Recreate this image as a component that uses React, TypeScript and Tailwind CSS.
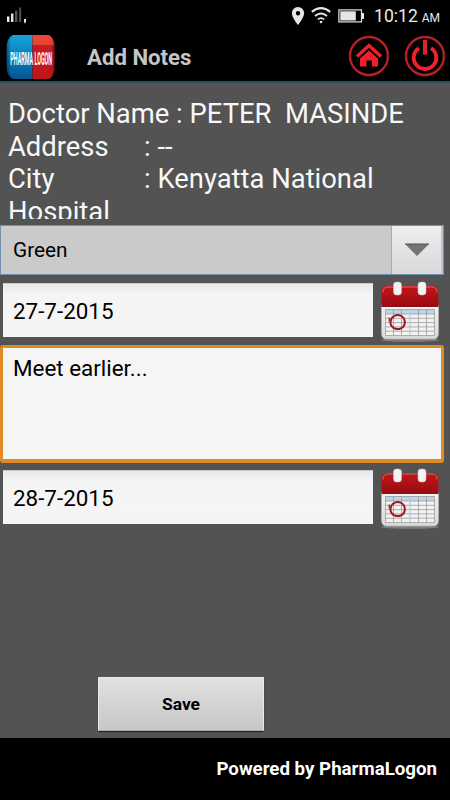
import React, { useState } from "react";

function StatusBar() {
  return (
    <div className="flex h-8 items-start justify-between">
      <svg className="ml-[6px] mt-[6px]" width="22" height="18" viewBox="0 0 22 18">
        <rect x="1" y="10.5" width="2.4" height="5.5" fill="#f2f2f2" />
        <rect x="5" y="7.5" width="2.4" height="8.5" fill="#e6e6e6" />
        <rect x="9" y="4.5" width="2.4" height="11.5" fill="#555" />
        <rect x="13" y="1.5" width="2.2" height="14.5" fill="#4b4b4b" />
        <path d="M18 13h2v3l-1 1.2h-.8l.3-1.4H18z" fill="#eee" />
      </svg>
      <div className="flex items-start text-[#e9e9e9]">
        <svg className="mt-[7px]" width="14" height="18" viewBox="0 0 14 18">
          <path
            fillRule="evenodd"
            d="M7 0a6.1 6.1 0 0 1 6.1 6.2C13.1 10.5 7 18 7 18S.9 10.5.9 6.2A6.1 6.1 0 0 1 7 0zm0 4a2.2 2.2 0 1 0 0 4.4A2.2 2.2 0 0 0 7 4z"
            fill="#e6e6e6"
          />
        </svg>
        <svg className="ml-[6px] mt-[7px]" width="20" height="17" viewBox="0 0 20 17" fill="none" stroke="#e6e6e6">
          <path d="M.8 4.9Q10-2.600 19.2 4.9" strokeWidth="2" />
          <path d="M4 8.9q6-5 12 0" strokeWidth="1.9" />
          <path d="M6.800 12.4q3.200-2.600 6.400 0" strokeWidth="1.8" />
          <circle cx="10" cy="15" r="1.3" fill="#e6e6e6" stroke="none" />
        </svg>
        <svg className="ml-[7px] mt-[9px]" width="27" height="14" viewBox="0 0 27 14">
          <rect x=".9" y=".9" width="22.6" height="12" fill="none" stroke="#e6e6e6" strokeWidth="1.2" />
          <rect x="2.3" y="2.3" width="15.500" height="9.2" fill="#e6e6e6" />
          <rect x="24" y="4" width="2" height="6" fill="#e6e6e6" />
        </svg>
        <div className="ml-[9px] mr-[10px] mt-[6px] flex w-[66px] items-baseline justify-between whitespace-nowrap leading-5">
          <span className="text-[17.6px]">10:12</span>
          <span className="text-[12px]">AM</span>
        </div>
      </div>
    </div>
  );
}

function Logo() {
  return (
    <svg className="overflow-visible" width="50" height="46" viewBox="0 0 50 46">
      <defs>
        <linearGradient id="logoBlue" x1="0" y1="0" x2="0" y2="1">
          <stop offset="0" stopColor="#18a5dc" />
          <stop offset=".5" stopColor="#087fbd" />
          <stop offset="1" stopColor="#08518e" />
        </linearGradient>
        <linearGradient id="logoRed" x1="0" y1="0" x2="0" y2="1">
          <stop offset="0" stopColor="#ee4638" />
          <stop offset=".24" stopColor="#e54335" />
          <stop offset=".25" stopColor="#c51c20" />
          <stop offset="1" stopColor="#be1519" />
        </linearGradient>
        <linearGradient id="logoEdge">
          <stop offset="0" stopColor="#000" stopOpacity=".45" />
          <stop offset=".1" stopColor="#000" stopOpacity="0" />
          <stop offset=".9" stopColor="#000" stopOpacity="0" />
          <stop offset="1" stopColor="#000" stopOpacity=".5" />
        </linearGradient>
        <clipPath id="logoShape">
          <path d="M7 1h36q5 3 5.500 10v24q-.5 7-5.500 10H7q-6-3-6.300-11V12Q1 4 7 1z" />
        </clipPath>
      </defs>
      <g clipPath="url(#logoShape)">
        <rect width="26.5" height="46" fill="url(#logoBlue)" />
        <rect x="26.5" width="23.5" height="46" fill="url(#logoRed)" />
        <rect width="50" height="46" fill="url(#logoEdge)" />
      </g>
      <text
        transform="translate(4.3 30.500) scale(.41 1)"
        fill="#fff"
        fontSize="18.5"
        fontWeight="700"
        textLength="102"
        lengthAdjust="spacingAndGlyphs"
      >
        PHARMA LOGON
      </text>
    </svg>
  );
}

function RoundIcon({ label, children }: { label: string; children: React.ReactNode }) {
  return (
    <button aria-label={label} className="h-[42px] w-[42px]">
      <svg width="42" height="42" viewBox="0 0 42 42">
        <circle cx="21" cy="21" r="19" fill="none" stroke="#5e1014" strokeWidth="3" />
        <circle cx="21" cy="21" r="19" fill="none" stroke="#cf2930" strokeWidth="1.3" />
        {children}
      </svg>
    </button>
  );
}

function Header() {
  return (
    <header className="flex h-[49px] items-center">
      <div className="ml-[6px]">
        <Logo />
      </div>
      <h1 className="ml-[31px] mt-px flex-1 whitespace-nowrap text-[22.2px] font-bold leading-7 text-[#c5c5c5]">
        Add Notes
      </h1>
      <div className="mr-[4px] mb-[2px] flex gap-[14px]">
        <RoundIcon label="Home">
          <path d="M9 21.500 21 10.500l12 11" fill="none" stroke="#f02029" strokeWidth="3.4" />
          <path d="M21 15.500 30 23.5V31.5H24V25.500h-5.500v6H12v-8z" fill="#f02029" />
        </RoundIcon>
        <RoundIcon label="Power">
          <path
            d="M15 13.1a11.3 11.3 0 1 0 12 0"
            fill="none"
            stroke="#f02029"
            strokeWidth="3.9"
          />
          <path d="M21 4.500v15" stroke="#000" strokeWidth="7" />
          <path d="M21 5v14.500" stroke="#e5222a" strokeWidth="4" />
        </RoundIcon>
      </div>
    </header>
  );
}

function CalendarIcon() {
  return (
    <svg width="60" height="62" viewBox="0 0 60 62">
      <defs>
        <linearGradient id="calRed" x1="0" y1="0" x2="0" y2="1">
          <stop offset="0" stopColor="#c3161b" />
          <stop offset="1" stopColor="#960c11" />
        </linearGradient>
        <linearGradient id="calBody" x1="0" y1="0" x2="0" y2="1">
          <stop offset="0" stopColor="#f4f4f4" />
          <stop offset="1" stopColor="#d8d8d8" />
        </linearGradient>
      </defs>
      <ellipse cx="30" cy="59" rx="29" ry="1.8" fill="#929292" opacity=".7" />
      <path d="M1.500 24h57v28q0 6-5 6h-47q-5 0-5-6z" fill="url(#calBody)" stroke="#b6b6b6" strokeWidth=".6" />
      <path d="M1.500 26V10.500Q1.500 5 7 5h46q5.500 0 5.500 5.500V26z" fill="url(#calRed)" />
      <path d="M3 11.500Q3 6 8 6h44q5 0 5 5.500" fill="none" stroke="#dc7779" strokeWidth=".8" />
      <rect x="5" y="28" width="50" height="27" rx="1" fill="#f2f2f2" />
      <rect x="5.5" y="28.5" width="49" height="4.5" fill="#b9d8e6" />
      <path
        d="M5.500 28.500h49v26h-49zM5.500 33h49M5.500 37.300h49M5.500 41.600h49M5.500 45.900h49M5.500 50.200h49M13.500 28.500V54M21.500 28.500V54M38.500 28.500V54M46.500 28.500V54"
        fill="none"
        stroke="#999"
        strokeWidth=".8"
      />
      <path d="M30 28.500V54" stroke="#adc5d5" strokeWidth="1" />
      <path
        d="M12.500 36c-3 4-2.800 8.500.8 10.800 5 3 11.800.4 11.500-6-.3-6.200-7.200-8.500-11.500-5.100"
        fill="none"
        stroke="#9c171b"
        strokeWidth="2"
        strokeLinecap="round"
      />
      <path d="M9.200 36.500v4" stroke="#9c171b" strokeWidth="1.2" />
      <rect x="13.500" y="1" width="8" height="13" rx="3" fill="#f4f2f2" stroke="#c9c3c3" strokeWidth=".5" />
      <rect x="38" y="1" width="8" height="13" rx="3" fill="#f4f2f2" stroke="#c9c3c3" strokeWidth=".5" />
    </svg>
  );
}

function DateRow({ value, onChange }: { value: string; onChange: (v: string) => void }) {
  return (
    <div className="flex h-[62px] items-start pl-[3px]">
      <input
        value={value}
        onChange={(e) => onChange(e.target.value)}
        className="mt-[2px] h-[54px] w-[370px] border-t border-[#c9c9c9] bg-linear-to-b from-[#e9e9e9] via-[#f5f5f5] via-20% to-[#f5f5f5] pl-[10px] text-[22.4px] text-black outline-none"
      />
      <button aria-label="Pick a date" className="ml-[7px]">
        <CalendarIcon />
      </button>
    </div>
  );
}

export default function App() {
  const [visitDate, setVisitDate] = useState("27-7-2015");
  const [nextDate, setNextDate] = useState("28-7-2015");
  const [note, setNote] = useState("Meet earlier...");

  return (
    <div className="flex h-[800px] w-[450px] flex-col overflow-hidden bg-[#535353] font-[Roboto,sans-serif]">
      <div className="h-[83px] shrink-0 border-b-2 border-[#24505f] bg-black">
        <StatusBar />
        <Header />
      </div>

      {/* Doctor details */}
      <div className="mt-[15px] h-[121px] shrink-0 overflow-hidden whitespace-pre pl-[8px] text-[27.4px] leading-[32.5px] text-[#f8f8f8]">
        <div>Doctor Name : PETER  MASINDE</div>
        <div className="flex">
          <span className="w-[136px]">Address</span>
          <span>: --</span>
        </div>
        <div className="flex">
          <span className="w-[136px]">City</span>
          <span>: Kenyatta National</span>
        </div>
        <div>Hospital</div>
      </div>

      {/* Colour select */}
      <button className="mt-[6px] flex h-[50px] w-[444px] shrink-0 border border-[#7390b3] bg-[#cacaca] text-left">
        <span className="flex-1 self-center pl-[12px] pt-[2px] text-[20.8px] text-black">Green</span>
        <span className="flex h-full w-[50px] items-center justify-center border-l border-[#aaa] bg-linear-to-b from-[#eeeeee] to-[#d9d9d9]">
          <svg width="24" height="14" viewBox="0 0 24 14">
            <path d="M0 1h24L12 13z" fill="#747474" />
            <path d="M0 1h24" stroke="#505050" />
          </svg>
        </span>
        <span className="h-full w-[2px] bg-[#b9c5d2]" />
      </button>

      {/* Notes form */}
      <div className="mt-[6px] shrink-0">
        <DateRow value={visitDate} onChange={setVisitDate} />
        <textarea
          value={note}
          onChange={(e) => setNote(e.target.value)}
          className="mt-[2px] block h-[118px] w-[444px] resize-none rounded-[3px] border-[3px] border-b-4 border-[#e08a24] bg-[#f5f5f5] px-[10px] pt-[7px] text-[22.4px] leading-[27px] text-black outline-none"
        />
        <div className="mt-[5px]">
          <DateRow value={nextDate} onChange={setNextDate} />
        </div>
      </div>

      <button className="ml-[98px] mt-auto mb-[7px] h-[54px] w-[166px] shrink-0 rounded-[1px] border border-[#eaeaea] border-b-[#aaa] bg-linear-to-b from-[#e1e1e1] to-[#c7c7c7] text-[17.4px] font-bold text-black shadow-[0_1px_1px_#222]">
        Save
      </button>

      <footer className="flex h-[62px] shrink-0 items-center justify-end bg-black pr-[13px] pt-px text-[18.7px] font-bold text-white">
        Powered by PharmaLogon
      </footer>
    </div>
  );
}
